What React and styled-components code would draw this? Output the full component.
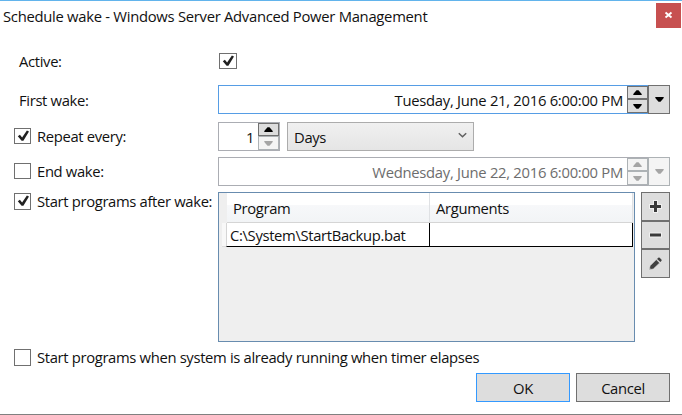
import React from "react";
import styled, { createGlobalStyle } from "styled-components";

const Global = createGlobalStyle`
  *, *::before, *::after { box-sizing: border-box; }
  body { margin: 0; background: #fff; }
`;

const Dialog = styled.div`
  width: 682px;
  height: 415px;
  display: flex;
  flex-direction: column;
  border-top: 1px solid #62b4ec;
  border-bottom: 1px solid #808080;
  background: #fff;
  color: #111;
  font: 14.8px/20px "Open Sans", "Noto Sans", sans-serif;
  overflow: hidden;
`;

const Label = styled.span`
  white-space: nowrap;
  letter-spacing: ${(p) => p.$spacing ?? -0.34}px;
`;

const TitleBar = styled.header`
  display: flex;
  justify-content: space-between;
  align-items: flex-start;
  height: 43px;
  padding: 2px 1px 0 3px;
  ${Label} { margin-top: 3px; }
`;

const CloseButton = styled.button`
  width: 25px;
  height: 25px;
  padding: 0;
  border: 0;
  background: #c75050;
  svg { display: block; }
`;

const Form = styled.main`
  display: flex;
  flex-direction: column;
  padding: 0 12px 0 14px;
`;

const Row = styled.div`
  display: grid;
  grid-template-columns: 204px 1fr;
  align-items: start;
  height: ${(p) => p.$height}px;
`;

const Caption = styled.label`
  display: flex;
  align-items: flex-start;
  gap: 6px;
  margin-top: ${(p) => p.$top ?? 4}px;
  padding-left: ${(p) => p.$indent ?? 0}px;
`;

const Box = styled.span`
  display: block;
  flex: none;
  width: ${(p) => p.$w ?? 17}px;
  height: ${(p) => p.$h ?? 16}px;
  margin-top: ${(p) => p.$top ?? 2}px;
  margin-left: ${(p) => p.$left ?? 0}px;
  border: 1px solid #707070;
  background: #fff;
  svg { display: block; margin: 0 auto; }
`;

const Field = styled.div`
  display: flex;
  align-items: stretch;
  justify-content: flex-end;
  width: ${(p) => p.$w ?? 452}px;
  height: 29px;
  border: 1px solid ${(p) => p.$border ?? "#abadb3"};
  color: ${(p) => (p.$disabled ? "#6d6d6d" : "#111")};
  ${Label} { margin: 4px 4px 0 0; }
`;

const Spinner = styled.div`
  display: flex;
  flex-direction: column;
  width: 21px;
  height: 27px;
`;

const SpinButton = styled.button`
  display: flex;
  align-items: center;
  justify-content: center;
  width: 21px;
  height: ${(p) => p.$h ?? 14}px;
  padding: 0;
  border: 1px solid ${(p) => (p.$disabled ? "#adb2b5" : "#707070")};
  background: ${(p) => (p.$disabled ? "#f4f4f4" : "#ddd")};
  color: ${(p) => (p.$disabled ? "#a5a5a5" : "#000")};
`;

const DropButton = styled(SpinButton)`
  width: 22px;
  height: 29px;
  margin: -1px -1px -1px 0;
`;

const Inline = styled.div`
  display: flex;
  gap: 7px;
`;

const Combo = styled.div`
  display: flex;
  justify-content: space-between;
  width: 187px;
  height: 29px;
  padding: 4px 6px 0 6px;
  border: 1px solid #acacac;
  background: linear-gradient(#f0f0f0, #e5e5e5);
  svg { margin-top: 5px; }
`;

const ListArea = styled.div`
  display: flex;
  gap: 6px;
`;

const List = styled.div`
  width: 417px;
  height: 150px;
  padding-right: 1px;
  border: 1px solid #688caf;
  background: #efefef;
`;

const HeaderRow = styled.div`
  display: grid;
  grid-template-columns: 203px 1fr;
  height: 30px;
  margin-left: 8px;
  border-bottom: 1px solid #d5d5d5;
  background: linear-gradient(#fff 0 40%, #f7f8fa 41%, #f2f4f6 100%);
`;

const HeaderCell = styled.div`
  padding: 5px 0 0 6px;
  border-right: 1px solid #dfe1e4;
`;

const DataRow = styled.div`
  display: grid;
  grid-template-columns: 7px 204px 1fr;
  height: 24px;
`;

const RowHandle = styled.div`
  margin-left: 3px;
  border-bottom: 1px solid #ddd;
  background: #f8f8f8;
`;

const Cell = styled.div`
  padding: 2px 0 0 3px;
  border-left: ${(p) => (p.$first ? "1px solid #d5d5d5" : "0")};
  border-right: 1px solid #000;
  border-bottom: 1px solid #000;
  background: #fff;
`;

const Tools = styled.div`
  display: flex;
  flex-direction: column;
`;

const ToolButton = styled.button`
  display: flex;
  align-items: center;
  justify-content: center;
  width: 29px;
  height: ${(p) => p.$h ?? 29}px;
  padding: 0;
  border: 1px solid #707070;
  background: #ddd;
`;

const Footer = styled.footer`
  display: flex;
  justify-content: flex-end;
  gap: 6px;
`;

const Button = styled.button`
  width: 94px;
  height: 29px;
  padding: 1px 0 0;
  border: 1px solid ${(p) => (p.$primary ? "#3399ff" : "#707070")};
  background: #ddd;
  color: #111;
  font: inherit;
`;

const Check = () => (
  <svg width="14" height="14" viewBox="0 0 14 14">
    <path d="M1.8 7.3 3.9 5.8l2.2 2.8L10.9 1.6l2.1 1L7.4 11.8H5.6z" fill="#212121" />
  </svg>
);

const Arrow = ({ down }) => (
  <svg width="9" height="5" viewBox="0 0 9 5">
    <path d={down ? "M.3 0h8.4v1L5.5 4.8h-2L.3 1z" : "M.3 5h8.4V4L5.5.2h-2L.3 4z"} fill="currentColor" />
  </svg>
);

const Spin = ({ upOff, downOff }) => (
  <Spinner>
    <SpinButton $h={13} $disabled={upOff}><Arrow /></SpinButton>
    <SpinButton $h={14} $disabled={downOff}><Arrow down /></SpinButton>
  </Spinner>
);

const DateField = ({ text, disabled }) => (
  <Field $disabled={disabled} $border={disabled ? "#abadb3" : "#569de5"}>
    <Label $spacing={-0.28}>{text}</Label>
    <Spin upOff={disabled} downOff={disabled} />
    <DropButton $h={29} $disabled={disabled}><Arrow down /></DropButton>
  </Field>
);

export default function App() {
  return (
    <Dialog>
      <Global />
      <TitleBar>
        <Label $spacing={-0.28}>Schedule wake - Windows Server Advanced Power Management</Label>
        <CloseButton aria-label="Close">
          <svg width="25" height="25" viewBox="0 0 25 25">
            <path d="m9.5 9.5 6 5M15.5 9.5l-6 5" stroke="#fff" strokeWidth="1.9" />
          </svg>
        </CloseButton>
      </TitleBar>
      <Form>
        <Row $height={41}>
          <Caption $top={7} $indent={5}><Label>Active:</Label></Caption>
          <Box $w={18} $top={9} $left={1}><Check /></Box>
        </Row>
        <Row $height={37}>
          <Caption $top={5} $indent={5}><Label>First wake:</Label></Caption>
          <DateField text="Tuesday, June 21, 2016 6:00:00 PM" />
        </Row>
        <Row $height={35}>
          <Caption><Box><Check /></Box><Label>Repeat every:</Label></Caption>
          <Inline>
            <Field $w={62}>
              <Label>1</Label>
              <Spin downOff />
            </Field>
            <Combo>
              <Label>Days</Label>
              <svg width="9" height="7" viewBox="0 0 9 7">
                <path d="m.8 1.2 3.7 3.6 3.7-3.6" fill="none" stroke="#606060" strokeWidth="1.5" />
              </svg>
            </Combo>
          </Inline>
        </Row>
        <Row $height={35}>
          <Caption><Box /><Label>End wake:</Label></Caption>
          <DateField disabled text="Wednesday, June 22, 2016 6:00:00 PM" />
        </Row>
        <Row $height={157}>
          <Caption $top={-1}><Box $h={17}><Check /></Box><Label>Start programs after wake:</Label></Caption>
          <ListArea>
            <List>
              <HeaderRow>
                <HeaderCell><Label>Program</Label></HeaderCell>
                <HeaderCell><Label>Arguments</Label></HeaderCell>
              </HeaderRow>
              <DataRow>
                <RowHandle />
                <Cell $first><Label>C:\System\StartBackup.bat</Label></Cell>
                <Cell />
              </DataRow>
            </List>
            <Tools>
              <ToolButton aria-label="Add">
                <svg width="15" height="15" viewBox="0 0 15 15">
                  <path d="M7.5 1v13M1 7.5h13" stroke="#f0f0f0" strokeWidth="5" />
                  <path d="M7.5 2v11M2 7.5h11" stroke="#3a3a3a" strokeWidth="3" />
                </svg>
              </ToolButton>
              <ToolButton aria-label="Remove" $h={28}>
                <svg width="15" height="15" viewBox="0 0 15 15">
                  <path d="M1 7h13" stroke="#f0f0f0" strokeWidth="5" />
                  <path d="M2 7h11" stroke="#3a3a3a" strokeWidth="3" />
                </svg>
              </ToolButton>
              <ToolButton aria-label="Edit">
                <svg width="15" height="15" viewBox="0 0 15 15">
                  <path d="m1.2 13.8.9-4 6.2-6.2 3.3 3.3-6.3 6z" fill="#404040" stroke="#eee" strokeWidth=".5" />
                  <path d="m9.1 2.9 1.1-1.1q.8-.6 1.5 0l1.7 1.7q.6.8 0 1.5l-1.1 1.1z" fill="#404040" />
                  <path d="m1.9 12.2 1 1" stroke="#ddd" strokeWidth=".6" />
                </svg>
              </ToolButton>
            </Tools>
          </ListArea>
        </Row>
        <Row $height={24}>
          <Caption $top={-2}><Box $h={17} /><Label>Start programs when system is already running when timer elapses</Label></Caption>
        </Row>
        <Footer>
          <Button $primary><Label>OK</Label></Button>
          <Button><Label>Cancel</Label></Button>
        </Footer>
      </Form>
    </Dialog>
  );
}
